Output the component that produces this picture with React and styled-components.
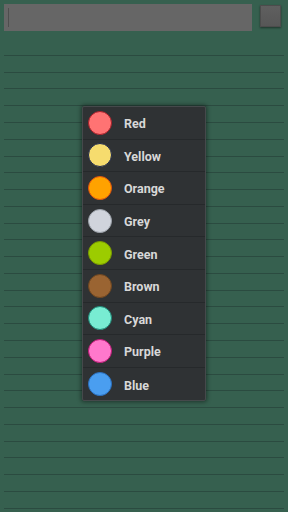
import styled, { createGlobalStyle } from "styled-components";

const GlobalStyle = createGlobalStyle`
    html, body {
        margin: 0;
        padding: 0;
        background: #36604f;
    }
    * {
        box-sizing: border-box;
    }
`;

const colors = [
    { name: "Red", fill: "#ff7373", edge: "#a8202a" },
    { name: "Yellow", fill: "#f6dc6e", edge: "#1f2a50" },
    { name: "Orange", fill: "#ffa200", edge: "#e0520e" },
    { name: "Grey", fill: "#d0d4dc", edge: "#9aa0a8" },
    { name: "Green", fill: "#9ccc00", edge: "#7a9a00" },
    { name: "Brown", fill: "#9a6432", edge: "#6e4620" },
    { name: "Cyan", fill: "#78ecd2", edge: "#1f8a78" },
    { name: "Purple", fill: "#ff78cc", edge: "#c01a78" },
    { name: "Blue", fill: "#4a9ef0", edge: "#2a70c0" },
];

export default function App() {
    const lines = Array.from({ length: 28 });

    return (
        <>
            <GlobalStyle />
            <Screen>
                <TopBar>
                    <Field>
                        <Caret />
                    </Field>
                    <SquareButton />
                </TopBar>
                <Ruled>
                    {lines.map((_, i) => (
                        <Line key={i} />
                    ))}
                </Ruled>

                <Menu>
                    {colors.map((c, i) => (
                        <Item key={c.name} $last={i === colors.length - 1}>
                            <Swatch $fill={c.fill} $edge={c.edge} />
                            <Label>{c.name}</Label>
                        </Item>
                    ))}
                </Menu>
            </Screen>
        </>
    );
}

const Screen = styled.div`
    position: relative;
    width: 288px;
    height: 512px;
    overflow: hidden;
    background: #36604f;
    font-family: Roboto, "Liberation Sans", sans-serif;
`;

const TopBar = styled.div`
    display: flex;
    align-items: flex-start;
    padding: 4px 4px 0 4px;
    height: 39px;
`;

const Field = styled.div`
    width: 248px;
    height: 27px;
    background: #666666;
    display: flex;
    align-items: center;
    padding-left: 4px;
`;

const Caret = styled.div`
    width: 1px;
    height: 19px;
    background: #4e4e4e;
`;

const SquareButton = styled.div`
    width: 21px;
    height: 22px;
    margin-left: 8px;
    margin-top: 1px;
    background: linear-gradient(#5f5f5f, #575757);
    border: 1px solid #4c4c4c;
    box-shadow: 0 1px 2px rgba(0, 0, 0, 0.45);
`;

const Ruled = styled.div`
    display: flex;
    flex-direction: column;
    margin: 0 4px;
    padding-top: 0.2px;
`;

const Line = styled.div`
    height: 16.78px;
    flex-shrink: 0;
    border-bottom: 1px solid #2b4b40;
`;

const Menu = styled.div`
    position: absolute;
    left: 82px;
    top: 106px;
    width: 124px;
    background: #2f3234;
    border: 1px solid #45494b;
    border-radius: 2px;
    box-shadow: 0 0 4px 1px rgba(0, 0, 0, 0.45);
    display: flex;
    flex-direction: column;
`;

const Item = styled.div`
    height: 32.6px;
    display: flex;
    align-items: center;
    padding-left: 5px;
    border-bottom: ${(p) => (p.$last ? "none" : "1px solid #26292b")};
`;

const Swatch = styled.div`
    width: 24px;
    height: 24px;
    border-radius: 50%;
    background: ${(p) => p.$fill};
    border: 1px solid ${(p) => p.$edge};
    flex-shrink: 0;
`;

const Label = styled.span`
    margin-left: 12px;
    margin-top: 2px;
    font-size: 12.5px;
    font-weight: 700;
    color: #d8d8d8;
`;
